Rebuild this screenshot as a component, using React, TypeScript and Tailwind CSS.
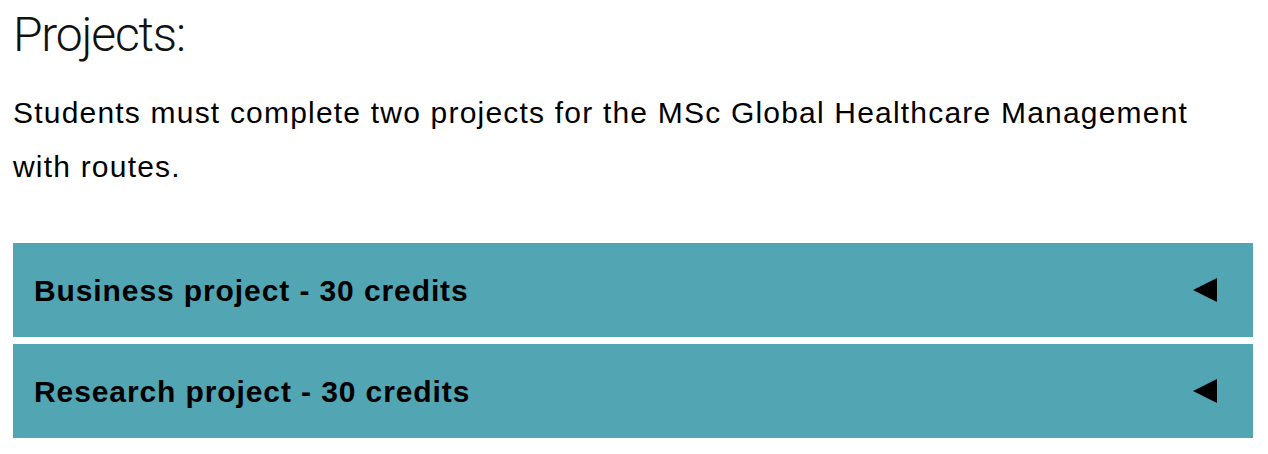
import React from "react";

function Panel({ title }: { title: string }) {
  return (
    <div className="flex h-[94px] items-center justify-between bg-[#52a5b3] pl-[21px] pr-[36px]">
      <span className="text-[30px] font-bold tracking-[0.9px] text-black" style={{ fontFamily: '"Liberation Sans", Arial, sans-serif' }}>
        {title}
      </span>
      <svg width="24" height="24" viewBox="0 0 24 24" className="block">
        <polygon points="0,12 24,0 24,24" fill="#000" />
      </svg>
    </div>
  );
}

export default function App() {
  return (
    <div className="min-h-[454px] w-[1268px] bg-white" style={{ fontFamily: '"Liberation Sans", Arial, sans-serif' }}>
      <div className="ml-[13px] w-[1240px]">
        <h2 className="pt-[6px] text-[48px] font-light leading-[58px] tracking-[-1.2px] text-[#111]" style={{ fontFamily: 'Roboto, "Liberation Sans", sans-serif' }}>
          Projects:
        </h2>
        <p className="mt-[22px] max-w-[1200px] text-[30px] leading-[54px] tracking-[1.2px] text-black">
          Students must complete two projects for the MSc Global Healthcare Management with routes.
        </p>
        <div className="mt-[49px] flex flex-col gap-[7px]">
          <Panel title="Business project - 30 credits" />
          <Panel title="Research project - 30 credits" />
        </div>
      </div>
    </div>
  );
}
